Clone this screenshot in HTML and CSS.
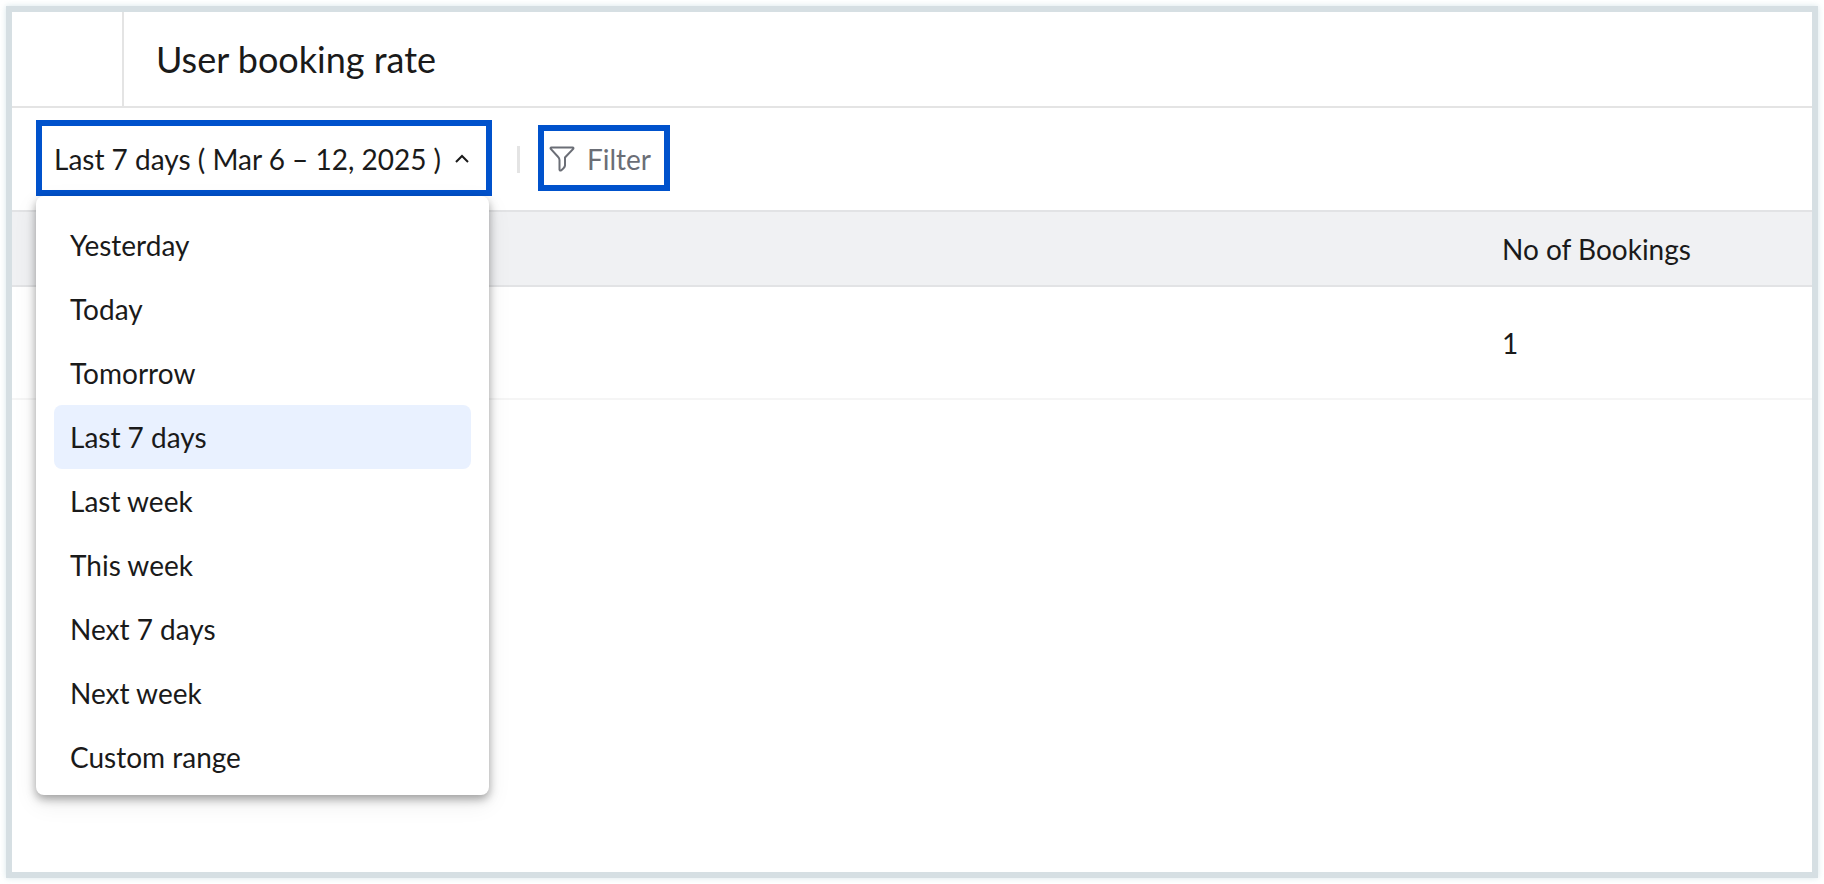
FILE: index.html
```html
<!DOCTYPE html>
<html lang="en">
<head>
    <meta charset="UTF-8">
    <meta name="viewport" content="width=device-width, initial-scale=1.0">
    <title>User booking rate</title>
    <link rel="stylesheet" href="styles.css">
</head>
<body>

<div class="panel">

    <header class="header">
        <div class="header-side"></div>
        <h1>User booking rate</h1>
    </header>

    <div class="toolbar">
        <div class="dropdown">
            <button type="button" class="range-button" aria-haspopup="true" aria-expanded="true">
                Last 7 days ( Mar 6 – 12, 2025 )
                <svg class="arrow" viewBox="0 0 14 8" aria-hidden="true">
                    <path d="M1 7L7 1L13 7"/>
                </svg>
            </button>
            <div class="menu">
                <button type="button">Yesterday</button>
                <button type="button">Today</button>
                <button type="button">Tomorrow</button>
                <button type="button" class="selected">Last 7 days</button>
                <button type="button">Last week</button>
                <button type="button">This week</button>
                <button type="button">Next 7 days</button>
                <button type="button">Next week</button>
                <button type="button">Custom range</button>
            </div>
        </div>
        <span class="divider"></span>
        <button type="button" class="filter-button">
            <svg class="funnel" viewBox="0 0 26 26" aria-hidden="true">
                <path d="M2.500 1.500H23.500Q25 1.700 24.200 3L16 11.500V19.500Q15.800 21 14.500 22.200L12.200 24.400Q10.700 25 10.500 23.700V14Q10.400 12.200 9.200 11L1.800 3Q1 1.700 2.500 1.500Z"/>
            </svg>
            Filter
        </button>
    </div>

    <table>
        <thead>
            <tr>
                <td></td>
                <th scope="col" class="count">No of Bookings</th>
            </tr>
        </thead>
        <tbody>
            <tr>
                <td></td>
                <td class="count">1</td>
            </tr>
        </tbody>
    </table>

</div>

</body>
</html>
```
FILE: styles.css
```css
* {
    box-sizing: border-box;
}

body {
    margin: 0;
    padding: 6px;
    font-family: Lato, sans-serif;
    font-size: 28px;
    line-height: 34px;
    color: #1a1a1a;
    background-color: #fff;
}

button {
    font: inherit;
    color: inherit;
    background-color: #fff;
    border: none;
    cursor: pointer;
}

.panel {
    min-height: calc(100vh - 12px);
    border: 6px solid #d6dfe3;
    box-shadow: 0 0 6px rgba(190, 215, 220, 0.6);
}

.header {
    display: flex;
    height: 96px;
    border-bottom: 2px solid #e4e4e4;
}

.header-side {
    width: 112px;
    border-right: 2px solid #e4e4e4;
}

h1 {
    margin: 0;
    padding-left: 32px;
    font-size: 36px;
    font-weight: 400;
    line-height: 94px;
}

.toolbar {
    display: flex;
    align-items: center;
    height: 102px;
    padding: 0 24px 2px;
}

.dropdown {
    position: relative;
}

.range-button {
    display: flex;
    align-items: center;
    gap: 14px;
    height: 76px;
    width: 456px;
    padding: 2px 12px 0;
    border: 6px solid #0052cc;
    white-space: nowrap;
}

.arrow {
    width: 14px;
    height: 8px;
    overflow: visible;
    fill: none;
    stroke: #1a1a1a;
    stroke-width: 2;
}

/* open menu under the date range */
.menu {
    position: absolute;
    top: 100%;
    left: 0;
    display: flex;
    flex-direction: column;
    width: 453px;
    padding: 17px 18px 6px;
    background-color: #fff;
    border-radius: 8px;
    box-shadow: 0 4px 10px rgba(0, 0, 0, 0.35), 0 8px 24px rgba(0, 0, 0, 0.08);
}

.menu button {
    height: 64px;
    padding: 0 16px;
    text-align: left;
    border-radius: 8px;
}

.menu button.selected,
.menu button:hover {
    background-color: #e9f1ff;
}

.divider {
    width: 3px;
    height: 27px;
    margin: 2px 18px 0 25px;
    background-color: #e4e4e4;
}

.filter-button {
    display: flex;
    align-items: center;
    gap: 12px;
    height: 66px;
    width: 132px;
    padding: 2px 5px 0;
    color: #6b6e76;
    border: 6px solid #0052cc;
}

.funnel {
    width: 26px;
    height: 26px;
    fill: none;
    stroke: #6b6e76;
    stroke-width: 2;
}

table {
    width: 100%;
    border-spacing: 0;
}

th, td {
    padding: 0;
    font-weight: 400;
    text-align: left;
}

thead th,
thead td {
    height: 77px;
    background-color: #f0f1f3;
    border-top: 2px solid #e2e3e5;
    border-bottom: 2px solid #e2e3e5;
}

tbody td {
    height: 113px;
    border-bottom: 2px solid #f5f5f5;
}

.count {
    width: 334px;
    padding-left: 24px;
}
```
